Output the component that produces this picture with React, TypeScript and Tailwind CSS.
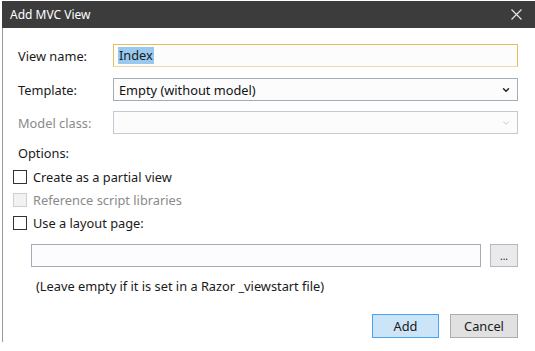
import { ChevronDown } from "lucide-react";

const font = { fontFamily: '"Noto Sans", "Open Sans", sans-serif' };

const Checkbox = ({ label, disabled }: { label: string; disabled?: boolean }) => (
  <div className="flex h-[23px] items-center ml-[10px]">
    <span
      className={
        disabled
          ? "h-[14px] w-[14px] border border-[#cfcfcf] bg-[#f2f2f2]"
          : "h-[14px] w-[14px] border border-[#333333] bg-white"
      }
    />
    <span className={disabled ? "ml-[6px] text-[#8a8a8a]" : "ml-[6px] text-[#1a1a1a]"}>{label}</span>
  </div>
);

export default function App() {
  return (
    <div className="h-[351px] w-[535px] overflow-hidden bg-white text-[12.8px] leading-[18px]" style={font}>
      <div className="ml-[2px] mt-px flex flex-col">
        <div className="flex h-[27px] items-center justify-between bg-[#3c3c3c] pl-[8px] pr-[13px] text-[12px] text-white">
          <span>Add MVC View</span>
          <svg width="11" height="11" viewBox="0 0 11 11" stroke="#e6e6e6" strokeWidth="1.2">
            <path d="M0.5 0.5 L10.5 10.5 M10.5 0.5 L0.5 10.5" />
          </svg>
        </div>

        <div className="flex h-[314px] flex-col border-l border-[#9a9a9a]">
          <div className="mt-[16px] flex h-[23px] items-center">
            <span className="ml-[15px] w-[95px] text-[#1a1a1a]">View name:</span>
            <div className="flex h-[23px] w-[405px] items-center border border-[#e3bf5f] border-b-[#edd9a3] bg-[#fcfcfc] pl-[4px]">
              <span className="bg-[#99c9ef] px-px leading-[17px] text-[#1a1a1a]">Index</span>
            </div>
          </div>

          <div className="mt-[11px] flex h-[23px] items-center">
            <span className="ml-[15px] w-[95px] text-[#1a1a1a]">Template:</span>
            <div className="flex h-[23px] w-[405px] items-center justify-between border border-[#a3acba] bg-[#fcfcfc] pl-[5px] pr-[6px]">
              <span className="text-[#111111]">Empty (without model)</span>
              <ChevronDown size={10} strokeWidth={3.5} color="#222222" />
            </div>
          </div>

          <div className="mt-[10px] flex h-[23px] items-center">
            <span className="ml-[15px] w-[95px] text-[#8a8a8a]">Model class:</span>
            <div className="flex h-[23px] w-[405px] items-center justify-end border border-[#c4cad3] bg-[#fcfcfc] pr-[6px]">
              <ChevronDown size={10} strokeWidth={2} color="#b8bec7" />
            </div>
          </div>

          <div className="ml-[15px] mt-[10px] text-[#1a1a1a]">Options:</div>

          <div className="mt-[3px] flex flex-col">
            <Checkbox label="Create as a partial view" />
            <Checkbox label="Reference script libraries" disabled />
            <Checkbox label="Use a layout page:" />
          </div>

          <div className="ml-[28px] mt-[10px] flex h-[23px]">
            <div className="h-[23px] w-[450px] border border-[#a3acba] bg-[#fcfcfc]" />
            <button className="ml-[9px] flex h-[23px] w-[28px] items-center justify-center border border-[#b9b9b9] bg-[#eaeaec] text-[10px] leading-none text-[#1a1a1a]">
              ...
            </button>
          </div>

          <div className="ml-[33px] mt-[10px] text-[#1a1a1a]">
            (Leave empty if it is set in a Razor _viewstart file)
          </div>

          <div className="mr-[17px] mt-[19px] flex justify-end gap-[11px]">
            <button className="h-[24px] w-[67px] border border-[#4aa3f2] bg-[#cce4f7] text-[#1a1a1a]">Add</button>
            <button className="h-[24px] w-[68px] border border-[#adadad] bg-[#e1e1e1] text-[#1a1a1a]">Cancel</button>
          </div>
        </div>
      </div>
    </div>
  );
}
